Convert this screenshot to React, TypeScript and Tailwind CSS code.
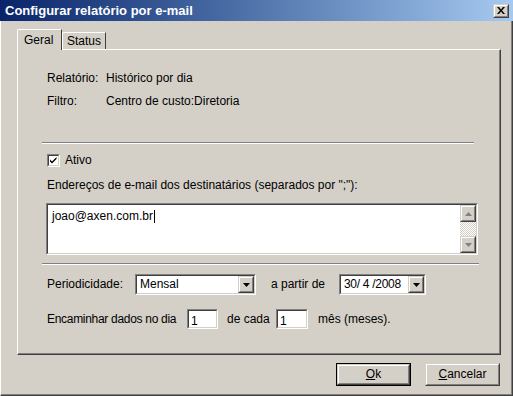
import { ReactNode } from 'react';

const face = 'bg-[#d4d0c8]';

const Sunken = ({ className, children }: { className: string; children?: ReactNode }) => (
  <div
    className={`border border-t-[#808080] border-l-[#808080] border-b-white border-r-white ${className}`}
  >
    <div className="h-full w-full border border-t-[#404040] border-l-[#404040] border-b-[#d4d0c8] border-r-[#d4d0c8] bg-white">
      {children}
    </div>
  </div>
);

const Raised = ({ className, children }: { className: string; children?: ReactNode }) => (
  <div
    className={`border border-t-[#d4d0c8] border-l-[#d4d0c8] border-b-[#404040] border-r-[#404040] ${face} ${className}`}
  >
    <div className="flex h-full w-full items-center justify-center border border-t-white border-l-white border-b-[#808080] border-r-[#808080]">
      {children}
    </div>
  </div>
);

const Arrow = ({ down = true, color = '#000' }: { down?: boolean; color?: string }) => (
  <svg width="7" height="4" viewBox="0 0 7 4">
    <path d={down ? 'M0 0h7L3.5 4z' : 'M0 4h7L3.5 0z'} fill={color} />
  </svg>
);

const Combo = ({ value, className }: { value: string; className: string }) => (
  <Sunken className={className}>
    <div className="flex h-full items-center">
      <span className="flex-1 pl-[3px]">{value}</span>
      <Raised className="h-full w-[16px]">
        <Arrow />
      </Raised>
    </div>
  </Sunken>
);

const Separator = ({ className }: { className: string }) => (
  <div className={`h-[2px] border-t border-t-[#808080] border-b border-b-white ${className}`} />
);

export default function App() {
  return (
    <div
      className={`flex h-[396px] w-[513px] flex-col overflow-hidden ${face} font-['Liberation_Sans',Arial,sans-serif] text-[12px] leading-[13px] text-black`}
    >
      {/* title bar */}
      <div className="flex h-[21px] shrink-0 items-center justify-between bg-gradient-to-r from-[#0a246a] to-[#a6caf0] pl-[5px] pr-[4px]">
        <span className="text-[13px] font-bold text-white">Configurar relatório por e-mail</span>
        <Raised className="h-[14px] w-[16px]">
          <svg width="8" height="7" viewBox="0 0 8 7">
            <path d="M0 0h2l2 2.5L6 0h2L5 3.5 8 7H6L4 4.5 2 7H0l3-3.5z" fill="#000" />
          </svg>
        </Raised>
      </div>

      {/* window body with frame */}
      <div className="flex flex-1 flex-col border-l border-l-white border-r border-r-[#404040] border-b border-b-[#404040]">
        <div className="flex flex-1 flex-col border-r border-r-[#808080] border-b border-b-[#808080] pl-[16px] pr-[10px]">
          {/* tabs */}
          <div className="mt-[8px] flex h-[20px] items-end">
            <div className="relative z-10 -mb-px flex h-[21px] w-[45px] items-start rounded-tl-[2px] border-l border-t border-l-white border-t-white border-r border-r-[#404040] bg-[#d4d0c8] pl-[6px] pt-[4px]">
              Geral
            </div>
            <div className="flex h-[17px] w-[44px] items-start rounded-tl-[2px] border-l border-t border-l-white border-t-white border-r border-r-[#404040] pl-[4px] pt-[2px]">
              Status
            </div>
          </div>

          {/* panel */}
          <div className="flex h-[306px] w-[484px] flex-col border-l border-t border-l-white border-t-white border-r border-r-[#404040] border-b border-b-[#404040]">
            <div className="flex flex-1 flex-col border-r border-r-[#808080] border-b border-b-[#808080] pl-[29px]">
              <div className="mt-[22px] flex">
                <span className="w-[59px]">Relatório:</span>
                <span>Histórico por dia</span>
              </div>
              <div className="mt-[10px] flex">
                <span className="w-[59px]">Filtro:</span>
                <span>Centro de custo:Diretoria</span>
              </div>

              <Separator className="ml-[-5px] mt-[34px] w-[432px]" />

              <div className="mt-[10px] flex items-center">
                <Sunken className="h-[13px] w-[13px]">
                  <svg width="9" height="9" viewBox="0 0 9 9" className="block">
                    <path d="M1 3.5l2 2 4.5-4.5v2L3 7.5l-2-2z" fill="#000" />
                  </svg>
                </Sunken>
                <span className="ml-[5px]">Ativo</span>
              </div>

              <div className="mt-[12px]">Endereços de e-mail dos destinatários (separados por ";"):</div>

              <Sunken className="ml-[-1px] mt-[11px] h-[52px] w-[432px]">
                <div className="flex h-full">
                  <div className="flex-1 pl-[4px] pt-[5px]">
                    joao@axen.com.br
                    <span className="ml-px inline-block h-[13px] w-px bg-black align-top" />
                  </div>
                  <div className="flex w-[16px] flex-col">
                    <Raised className="h-[17px] w-[16px]">
                      <Arrow down={false} color="#808080" />
                    </Raised>
                    <div className="flex-1 bg-[repeating-conic-gradient(#fff_0_25%,#d4d0c8_0_50%)] bg-[length:2px_2px]" />
                    <Raised className="h-[17px] w-[16px]">
                      <Arrow color="#808080" />
                    </Raised>
                  </div>
                </div>
              </Sunken>

              <Separator className="ml-[-5px] mt-[8px] w-[437px]" />

              <div className="mt-[9px] flex items-center">
                <span className="w-[88px] shrink-0">Periodicidade:</span>
                <Combo value="Mensal" className="h-[21px] w-[121px] shrink-0" />
                <span className="ml-[15px] w-[68px] shrink-0">a partir de</span>
                <Combo value="30/ 4 /2008" className="h-[21px] w-[87px] shrink-0 tracking-[-0.3px]" />
              </div>

              <div className="mt-[14px] flex items-center">
                <span className="w-[140px] shrink-0 tracking-[-0.3px]">Encaminhar dados no dia</span>
                <Sunken className="h-[20px] w-[31px] shrink-0">
                  <div className="pl-[2px] pt-[4px]">1</div>
                </Sunken>
                <span className="ml-[9px] w-[49px] shrink-0">de cada</span>
                <Sunken className="h-[20px] w-[32px] shrink-0">
                  <div className="pl-[2px] pt-[4px]">1</div>
                </Sunken>
                <span className="ml-[10px]">mês (meses).</span>
              </div>
            </div>
          </div>

          {/* buttons */}
          <div className="mt-[8px] flex justify-end gap-[14px] pr-[1px]">
            <div className="h-[23px] w-[75px] border border-black">
              <Raised className="h-full w-full">
                <span>
                  <span className="underline">O</span>k
                </span>
              </Raised>
            </div>
            <Raised className="h-[23px] w-[75px]">
              <span>
                <span className="underline">C</span>ancelar
              </span>
            </Raised>
          </div>
        </div>
      </div>
    </div>
  );
}
